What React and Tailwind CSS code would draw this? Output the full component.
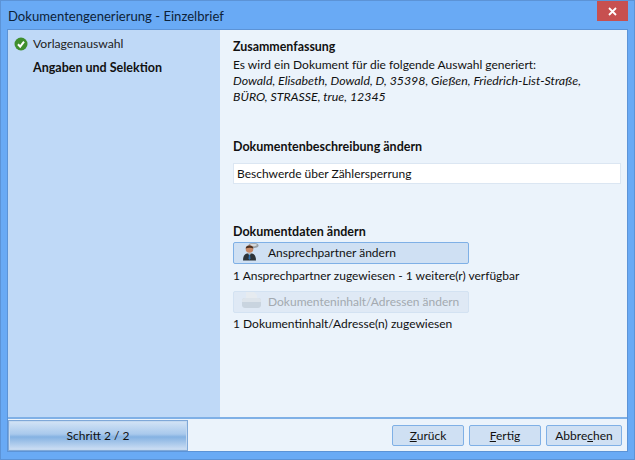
function CheckIcon() {
  return (
    <svg width="14" height="14" viewBox="0 0 14 14" className="shrink-0">
      <circle cx="7" cy="7" r="6.5" fill="#3f8f2e" />
      <path d="M4 7.2 L6.2 9.6 L10 4.6" fill="none" stroke="#fff" strokeWidth="2" />
    </svg>
  );
}

function PersonIcon() {
  return (
    <svg width="26" height="20" viewBox="0 1.5 26 20" className="shrink-0">
      <ellipse cx="12.5" cy="4" rx="5" ry="2.4" fill="#9a9fa3" />
      <ellipse cx="12.5" cy="3.5" rx="3.4" ry="1.2" fill="#d5d9dc" />
      <path d="M2 19 C2 14 4 12.5 6 12 L11 12 C13 12.5 15 14 15 19 Z" fill="#2d3338" />
      <circle cx="8.5" cy="7.5" r="3.8" fill="#c98a68" />
      <path d="M4.7 7 C4.5 3 12.3 2.8 12.4 7 C10 5.8 7 5.9 4.7 7 Z" fill="#4b3020" />
      <path d="M7 12 L10 12 L8.5 14 Z" fill="#e8eef2" />
      <path d="M8 13 L9 13 L9.5 17 L8.5 18.5 L7.5 17 Z" fill="#2c6fb0" />
    </svg>
  );
}

function TrayIcon() {
  return (
    <svg width="26" height="20" viewBox="0 2 26 20" className="shrink-0">
      <path d="M5 2 L13 2 L16 5 L16 11 L5 11 Z" fill="#e6ebf0" />
      <path d="M1 10 C1 8.5 3 8 5 8 L16 8 C18 8 20 8.5 20 10 L20 15 C20 17 18.5 18 17 18 L4 18 C2.5 18 1 17 1 15 Z" fill="#c9d4df" />
      <path d="M1 10 C1 8.5 3 8 5 8 L16 8 C18 8 20 8.5 20 10 L20 12 L1 12 Z" fill="#dde4eb" />
    </svg>
  );
}

function FooterButton({ children, className }) {
  return (
    <button className={`h-[21px] rounded-[2px] border border-[#7fb0e6] bg-[#cfe0f3] text-[12px] text-[#111] leading-none ${className}`}>
      {children}
    </button>
  );
}

export default function App() {
  return (
    <div
      className="flex h-[460px] w-[635px] flex-col border border-[#5c93d6] bg-[#69aaf5] text-[12px] leading-[16px] text-[#111]"
      style={{ fontFamily: 'Lato, "Open Sans", sans-serif' }}
    >
      {/* title bar */}
      <div className="flex h-[28px] shrink-0 items-start justify-between pr-[6px]">
        <div className="pt-[6px] pl-[7px] text-[13.1px] leading-[18px] text-[#0d2238]">
          Dokumentengenerierung - Einzelbrief
        </div>
        <div className="flex h-[20px] w-[31px] items-center justify-center bg-[#c75050]">
          <svg width="9" height="9" viewBox="0 0 9 9">
            <path d="M1 1 L8 8 M8 1 L1 8" stroke="#fff" strokeWidth="1.8" />
          </svg>
        </div>
      </div>

      {/* client area */}
      <div className="mx-[6px] mb-[7px] flex min-h-0 flex-1 flex-col border border-[#5c93d6] bg-[#ebf3fb]">
        <div className="flex min-h-0 flex-1">
          <div className="w-[212px] shrink-0 bg-[#bfd9f7] pt-[6px]">
            <div className="flex h-[16px] items-center gap-[5px] pl-[6px] text-[#222]">
              <CheckIcon />
              <span className="text-[12.2px]">Vorlagenauswahl</span>
            </div>
            <div className="mt-[8px] pl-[25px] text-[12.5px] font-bold text-[#111]">Angaben und Selektion</div>
          </div>

          <div className="flex-1 pl-[13px] pt-[9px] pr-[6px]">
            <div className="text-[12.4px] font-bold">Zusammenfassung</div>
            <div className="mt-[2px]">Es wird ein Dokument für die folgende Auswahl generiert:</div>
            <div className="text-[12.35px] italic">
              Dowald, Elisabeth, Dowald, D, 35398, Gießen, Friedrich-List-Straße,
              <br />
              BÜRO, STRASSE, true, 12345
            </div>

            <div className="mt-[34px] text-[12.5px] font-bold">Dokumentenbeschreibung ändern</div>
            <div className="mt-[8px] flex h-[21px] items-center border border-[#dbe6f2] bg-white pl-[3px]">
              Beschwerde über Zählersperrung
            </div>

            <div className="mt-[40px] text-[12.5px] font-bold">Dokumentdaten ändern</div>
            <button className="mt-[2px] flex h-[22px] w-[236px] items-center rounded-[2px] border border-[#7fb0e6] bg-[#cfe0f3] pl-[7px]">
              <PersonIcon />
              <span className="ml-[1px]">Ansprechpartner ändern</span>
            </button>
            <div className="mt-[4px]">1 Ansprechpartner zugewiesen - 1 weitere(r) verfügbar</div>
            <button className="mt-[7px] flex h-[22px] w-[236px] items-center rounded-[2px] border border-[#d3e2f2] bg-[#dfe9f5] pl-[7px] text-[#a3a9b0]">
              <TrayIcon />
              <span className="ml-[1px] whitespace-nowrap">Dokumenteninhalt/Adressen ändern</span>
            </button>
            <div className="mt-[3px]">1 Dokumentinhalt/Adresse(n) zugewiesen</div>
          </div>
        </div>

        {/* footer */}
        <div className="flex h-[34px] shrink-0 items-end border-t-2 border-[#7fb0e6] pr-[5px]">
          <div className="flex h-[31px] w-[180px] items-center justify-center border border-[#7fa8d8] bg-[linear-gradient(#d4e4f6,#a9c9ec_45%,#85b2e2_55%,#cfe0f4)] shadow-[inset_0_0_0_1px_#c4d9f0]">
            Schritt 2 / 2
          </div>
          <div className="ml-auto flex gap-[5px] pb-[5px]">
            <FooterButton className="w-[72px]"><u>Z</u>urück</FooterButton>
            <FooterButton className="w-[72px]"><u>F</u>ertig</FooterButton>
            <FooterButton className="w-[76px]">Abbre<u>c</u>hen</FooterButton>
          </div>
        </div>
      </div>
    </div>
  );
}
